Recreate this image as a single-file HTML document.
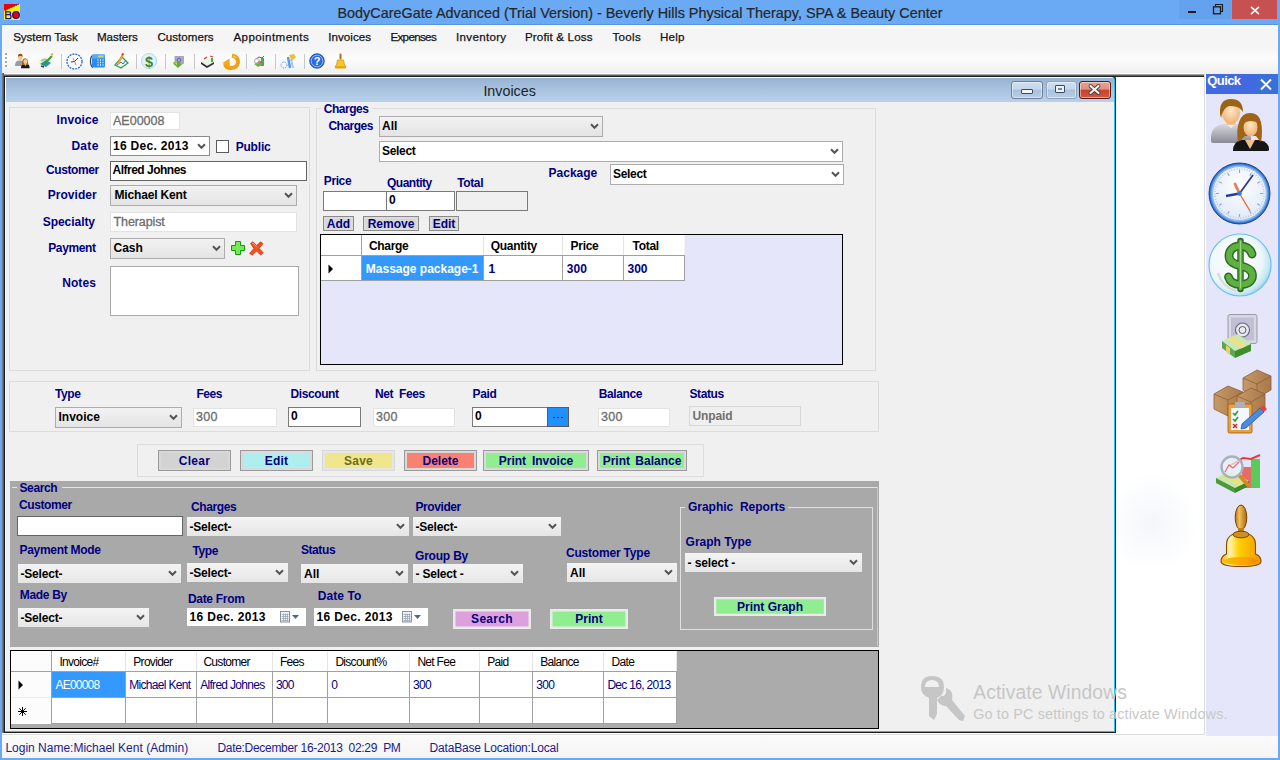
<!DOCTYPE html><html><head><meta charset="utf-8"><style>
html,body{margin:0;padding:0}
body{width:1280px;height:760px;overflow:hidden;position:relative;background:#6AAAF4;font-family:"Liberation Sans",sans-serif}
.r{position:absolute;box-sizing:content-box}
.t{position:absolute;white-space:nowrap}
svg.r{overflow:visible}
</style></head><body>
<svg class="r" style="left:4px;top:4px" width="16" height="16" viewBox="0 0 16 16"><rect x="0" y="0" width="16" height="16" fill="#FFF000"/><polygon points="0,0 15,0 0,6.8" fill="#F00000"/><line x1="1" y1="6.2" x2="15" y2="0" stroke="#1A10A0" stroke-width="1" stroke-dasharray="1.2 0.8"/><path d="M1.8,6.5 V14.6 H6.2 Q7,14.6 7,12.6 Q7,11 5.8,10.6 Q6.6,10 6.6,9 Q6.6,7.8 5.6,7.8 H1.8 M1.8,10.6 H5.8" fill="none" stroke="#1A10A0" stroke-width="1.3"/><circle cx="12" cy="11" r="3.3" fill="#F00000" stroke="#1A10A0" stroke-width="1.3"/></svg>
<div class="t" style="left:337.5px;top:5.81px;font-size:14.4px;line-height:14.4px;font-weight:normal;color:#262626;-webkit-text-stroke:0.2px #262626;">BodyCareGate Advanced (Trial Version) - Beverly Hills Physical Therapy, SPA &amp; Beauty Center</div>
<div class="r" style="left:1179px;top:0px;width:52px;height:19px;background:#64A2EE;"></div>
<div class="r" style="left:1188px;top:11px;width:8px;height:2px;background:#1A1A1A;"></div>
<svg class="r" style="left:1212px;top:3px" width="12" height="12" viewBox="0 0 12 12"><path d="M3.5,3 V1.5 H10.5 V8.5 H9" fill="none" stroke="#1A1A1A" stroke-width="1.1"/><rect x="1.5" y="3.8" width="7" height="7" fill="none" stroke="#1A1A1A" stroke-width="1.3"/></svg>
<div class="r" style="left:1232px;top:0px;width:45px;height:19px;background:#C75050;"></div>
<svg class="r" style="left:1250px;top:5.5px" width="10" height="9" viewBox="0 0 10 9"><path d="M1,0.8 L9,8.2 M9,0.8 L1,8.2" stroke="#fff" stroke-width="1.6"/></svg>
<div class="r" style="left:2px;top:24px;width:1276px;height:1px;background:#5A94DE;"></div>
<div class="r" style="left:2px;top:25px;width:1276px;height:733px;background:#F0F0F0;"></div>
<div class="r" style="left:2px;top:25px;width:1276px;height:24px;background:linear-gradient(#F8FAFA,#F5F5F5 20%,#F5F5F5);"></div>
<div class="t" style="left:13.2px;top:31.18px;font-size:11.6px;line-height:11.6px;font-weight:normal;color:#141414;letter-spacing:-0.09px;-webkit-text-stroke:0.25px #141414;">System Task</div>
<div class="t" style="left:97px;top:31.18px;font-size:11.6px;line-height:11.6px;font-weight:normal;color:#141414;letter-spacing:-0.08px;-webkit-text-stroke:0.25px #141414;">Masters</div>
<div class="t" style="left:157.5px;top:31.18px;font-size:11.6px;line-height:11.6px;font-weight:normal;color:#141414;-webkit-text-stroke:0.25px #141414;">Customers</div>
<div class="t" style="left:233.4px;top:31.18px;font-size:11.6px;line-height:11.6px;font-weight:normal;color:#141414;letter-spacing:0.41px;-webkit-text-stroke:0.25px #141414;">Appointments</div>
<div class="t" style="left:328.3px;top:31.18px;font-size:11.6px;line-height:11.6px;font-weight:normal;color:#141414;letter-spacing:0.03px;-webkit-text-stroke:0.25px #141414;">Invoices</div>
<div class="t" style="left:390.4px;top:31.18px;font-size:11.6px;line-height:11.6px;font-weight:normal;color:#141414;letter-spacing:-0.66px;-webkit-text-stroke:0.25px #141414;">Expenses</div>
<div class="t" style="left:456px;top:31.18px;font-size:11.6px;line-height:11.6px;font-weight:normal;color:#141414;letter-spacing:0.31px;-webkit-text-stroke:0.25px #141414;">Inventory</div>
<div class="t" style="left:524.9px;top:31.18px;font-size:11.6px;line-height:11.6px;font-weight:normal;color:#141414;letter-spacing:0.16px;-webkit-text-stroke:0.25px #141414;">Profit &amp; Loss</div>
<div class="t" style="left:612.5px;top:31.18px;font-size:11.6px;line-height:11.6px;font-weight:normal;color:#141414;letter-spacing:0.28px;-webkit-text-stroke:0.25px #141414;">Tools</div>
<div class="t" style="left:660px;top:31.18px;font-size:11.6px;line-height:11.6px;font-weight:normal;color:#141414;letter-spacing:0.23px;-webkit-text-stroke:0.25px #141414;">Help</div>
<div class="r" style="left:2px;top:49px;width:1276px;height:25px;background:linear-gradient(#F6F6F6,#FCFCFC 35%,#F6F6F6 70%,#EEEEEE);border-bottom-left-radius:3px;"></div>
<div class="r" style="left:2px;top:73px;width:1202px;height:663px;background:#FFFFFF;"></div>
<div class="r" style="left:1117px;top:465px;width:87px;height:120px;background:radial-gradient(ellipse 45px 50px at 35px 58px,rgba(232,238,246,0.5),rgba(255,255,255,0))"></div>
<div class="r" style="left:2px;top:74px;width:1202px;height:1px;background:#A4A4A4;"></div>
<div class="r" style="left:2px;top:75px;width:1202px;height:1px;background:#5E5E5E;"></div>
<div class="r" style="left:2px;top:76px;width:1202px;height:1px;background:#2A2A2E;"></div>
<div class="r" style="left:2px;top:73px;width:2px;height:663px;background:linear-gradient(90deg,#8A8A8A,#4A4A4A);"></div>
<div class="r" style="left:1204px;top:74px;width:1px;height:661px;background:#DCDCDC;"></div>
<div class="r" style="left:2px;top:734px;width:1203px;height:1px;background:#DCDCDC;"></div>
<div class="r" style="left:4px;top:76px;width:1112px;height:657px;background:#1A1A1E;border-top-right-radius:3px;"></div>
<div class="r" style="left:5px;top:77px;width:1110px;height:655px;background:#20C0F0;border-top-right-radius:3px;"></div>
<div class="r" style="left:5px;top:77px;width:1109px;height:654px;background:#FFFFFF;border-top-right-radius:3px;"></div>
<div class="r" style="left:6px;top:78px;width:1108px;height:24px;background:linear-gradient(#98B3D2,#A9C3E0 50%,#B9D1EA);"></div>
<div class="r" style="left:6px;top:102px;width:1108px;height:629px;background:#F0F0F0;"></div>
<div class="r" style="left:6px;top:102px;width:1px;height:629px;background:#DDEEF5;"></div>
<div class="t" style="left:483.4px;top:83.80px;font-size:14.3px;line-height:14.3px;font-weight:normal;color:#1E1E1E;">Invoices</div>
<div class="r" style="left:1011px;top:81px;width:30px;height:16px;border:1px solid #6F7F97;border-radius:3px;background:linear-gradient(#D0DFF0,#C3D6EC 45%,#A8C0DC 50%,#B8CEE8);box-shadow:inset 0 0 0 1px rgba(255,255,255,0.45)"></div>
<div class="r" style="left:1021px;top:89px;width:10px;height:3px;background:#F4F4F4;border:1px solid #3F4A5A;border-radius:1px"></div>
<div class="r" style="left:1046px;top:81px;width:29px;height:16px;border:1px solid #8FA3BD;border-radius:3px;background:linear-gradient(#D0DFF0,#C3D6EC 45%,#A8C0DC 50%,#B8CEE8);box-shadow:inset 0 0 0 1px rgba(255,255,255,0.45)"></div>
<div class="r" style="left:1055px;top:85px;width:8px;height:6px;background:#F0F0F0;border:1px solid #3F4A5A;border-radius:1px"></div>
<div class="r" style="left:1058px;top:88px;width:4px;height:2px;background:#6A8AB0"></div>
<div class="r" style="left:1079px;top:81px;width:30px;height:16px;border:1px solid #5A1A1A;border-radius:3px;background:linear-gradient(#E8A090,#E39080 45%,#C8402A 50%,#D05A40);box-shadow:inset 0 0 0 1px rgba(255,255,255,0.45)"></div>
<svg class="r" style="left:1088px;top:84px" width="13" height="11" viewBox="0 0 13 11"><path d="M2.5,2 L10.5,9 M10.5,2 L2.5,9" stroke="#3A3A4A" stroke-width="3.8" stroke-linecap="round"/><path d="M2.5,2 L10.5,9 M10.5,2 L2.5,9" stroke="#F4F4F4" stroke-width="2.2" stroke-linecap="round"/></svg>
<div class="r" style="left:9px;top:107px;width:299px;height:262px;background:transparent;border:1px solid #DCDCDC;"></div>
<div class="t" style="right:1181.4px;top:114.04px;font-size:12px;line-height:12px;font-weight:bold;color:#000080;letter-spacing:0.1px;">Invoice</div>
<div class="t" style="right:1181.4px;top:139.84px;font-size:12px;line-height:12px;font-weight:bold;color:#000080;letter-spacing:0.3px;">Date</div>
<div class="t" style="right:1181.2px;top:163.74px;font-size:12px;line-height:12px;font-weight:bold;color:#000080;letter-spacing:-0.4px;">Customer</div>
<div class="t" style="right:1183.2px;top:189.34px;font-size:12px;line-height:12px;font-weight:bold;color:#000080;letter-spacing:0.05px;">Provider</div>
<div class="t" style="right:1185px;top:215.84px;font-size:12px;line-height:12px;font-weight:bold;color:#000080;letter-spacing:-0.05px;">Specialty</div>
<div class="t" style="right:1184.5px;top:242.34px;font-size:12px;line-height:12px;font-weight:bold;color:#000080;letter-spacing:-0.4px;">Payment</div>
<div class="t" style="right:1184px;top:277.34px;font-size:12px;line-height:12px;font-weight:bold;color:#000080;letter-spacing:0.1px;">Notes</div>
<div class="r" style="left:110px;top:112px;width:68px;height:16px;background:#fff;border:1px solid #E3E3E3;"></div>
<div class="t" style="left:113px;top:114.72px;font-size:12.5px;line-height:12.5px;font-weight:normal;color:#6D6D6D;-webkit-text-stroke:0.3px #6D6D6D;">AE00008</div>
<div class="r" style="left:110px;top:136px;width:98px;height:18px;background:#fff;border:1px solid #8C8C8C;"></div>
<div class="t" style="left:113px;top:139.84px;font-size:12px;line-height:12px;font-weight:bold;color:#000;letter-spacing:0.3px;">16 Dec. 2013</div>
<svg class="r" style="left:197.0px;top:142.5px" width="9" height="7" viewBox="0 0 9 7"><polyline points="1,1.2 4.5,4.8 8,1.2" fill="none" stroke="#555" stroke-width="2"/></svg>
<div class="r" style="left:216px;top:140px;width:11px;height:11px;background:#fff;border:1px solid #5A5A5A;"></div>
<div class="t" style="left:235.7px;top:140.84px;font-size:12px;line-height:12px;font-weight:bold;color:#000080;letter-spacing:-0.2px;">Public</div>
<div class="r" style="left:110px;top:161px;width:195px;height:18px;background:#fff;border:1px solid #646464;"></div>
<div class="t" style="left:112.5px;top:163.84px;font-size:12px;line-height:12px;font-weight:bold;color:#000;letter-spacing:-0.5px;">Alfred Johnes</div>
<div class="r" style="left:110px;top:185px;width:185px;height:19px;background:linear-gradient(#F2F2F2,#E4E4E4);border:1px solid #ACACAC;"></div>
<div class="t" style="left:114.5px;top:189.44px;font-size:12px;line-height:12px;font-weight:bold;color:#000;letter-spacing:-0.17px;">Michael Kent</div>
<svg class="r" style="left:284.0px;top:192.0px" width="9" height="7" viewBox="0 0 9 7"><polyline points="1,1.2 4.5,4.8 8,1.2" fill="none" stroke="#555" stroke-width="2"/></svg>
<div class="r" style="left:110px;top:212px;width:185px;height:18px;background:#fff;border:1px solid #E3E3E3;"></div>
<div class="t" style="left:113.5px;top:215.62px;font-size:12.5px;line-height:12.5px;font-weight:normal;color:#6D6D6D;letter-spacing:-0.1px;-webkit-text-stroke:0.3px #6D6D6D;">Therapist</div>
<div class="r" style="left:110px;top:238px;width:113px;height:18.5px;background:linear-gradient(#F2F2F2,#E4E4E4);border:1px solid #ACACAC;"></div>
<div class="t" style="left:113.5px;top:242.44px;font-size:12px;line-height:12px;font-weight:bold;color:#000;">Cash</div>
<svg class="r" style="left:212.0px;top:244.8px" width="9" height="7" viewBox="0 0 9 7"><polyline points="1,1.2 4.5,4.8 8,1.2" fill="none" stroke="#555" stroke-width="2"/></svg>
<svg class="r" style="left:231px;top:241px" width="14" height="14" viewBox="0 0 14 14"><path d="M4.5,0.5 H9.5 V4.5 H13.5 V9.5 H9.5 V13.5 H4.5 V9.5 H0.5 V4.5 H4.5 Z" fill="#78E858" stroke="#109A10" stroke-width="1"/></svg>
<svg class="r" style="left:249px;top:241px" width="15" height="15" viewBox="0 0 15 15"><path d="M1.5,2.5 L4,0.8 L7.8,4.6 L11.5,0.8 L14,2.8 L10,7.2 L14.2,11.8 L11.6,14 L7.6,10 L3.4,14 L0.6,12.4 L5,7.4 Z" fill="#F4501E" stroke="#D02000" stroke-width="0.7"/><path d="M3,3 L4,2 L7.8,6" stroke="#FF9A70" stroke-width="1" fill="none"/></svg>
<div class="r" style="left:110px;top:266px;width:187px;height:48px;background:#fff;border:1px solid #ABABAB;"></div>
<div class="r" style="left:315.5px;top:108px;width:558.5px;height:261px;background:transparent;border:1px solid #DCDCDC;"></div>
<div class="r" style="left:322px;top:103px;width:50px;height:9px;background:#F0F0F0;"></div>
<div class="t" style="left:323.8px;top:102.84px;font-size:12px;line-height:12px;font-weight:bold;color:#000080;letter-spacing:-0.5px;">Charges</div>
<div class="t" style="left:328.4px;top:120.24px;font-size:12px;line-height:12px;font-weight:bold;color:#000080;letter-spacing:-0.5px;">Charges</div>
<div class="r" style="left:379px;top:116px;width:222px;height:19px;background:linear-gradient(#F2F2F2,#E4E4E4);border:1px solid #ACACAC;"></div>
<div class="t" style="left:382px;top:120.44px;font-size:12px;line-height:12px;font-weight:bold;color:#000;">All</div>
<svg class="r" style="left:590.0px;top:123.0px" width="9" height="7" viewBox="0 0 9 7"><polyline points="1,1.2 4.5,4.8 8,1.2" fill="none" stroke="#555" stroke-width="2"/></svg>
<div class="r" style="left:379px;top:141px;width:462px;height:18.5px;background:#fff;border:1px solid #ACACAC;"></div>
<div class="t" style="left:382px;top:144.84px;font-size:12px;line-height:12px;font-weight:bold;color:#000;letter-spacing:-0.3px;">Select</div>
<svg class="r" style="left:830.0px;top:147.8px" width="9" height="7" viewBox="0 0 9 7"><polyline points="1,1.2 4.5,4.8 8,1.2" fill="none" stroke="#555" stroke-width="2"/></svg>
<div class="t" style="left:548.6px;top:167.24px;font-size:12px;line-height:12px;font-weight:bold;color:#000080;">Package</div>
<div class="r" style="left:610px;top:164.3px;width:232px;height:18.69999999999999px;background:#fff;border:1px solid #ACACAC;"></div>
<div class="t" style="left:613px;top:168.14px;font-size:12px;line-height:12px;font-weight:bold;color:#000;letter-spacing:-0.3px;">Select</div>
<svg class="r" style="left:831.0px;top:171.2px" width="9" height="7" viewBox="0 0 9 7"><polyline points="1,1.2 4.5,4.8 8,1.2" fill="none" stroke="#555" stroke-width="2"/></svg>
<div class="t" style="left:323.8px;top:175.44px;font-size:12px;line-height:12px;font-weight:bold;color:#000080;letter-spacing:-0.4px;">Price</div>
<div class="t" style="left:387px;top:176.84px;font-size:12px;line-height:12px;font-weight:bold;color:#000080;letter-spacing:-0.5px;">Quantity</div>
<div class="t" style="left:457.3px;top:176.84px;font-size:12px;line-height:12px;font-weight:bold;color:#000080;letter-spacing:-0.4px;">Total</div>
<div class="r" style="left:323px;top:191px;width:62px;height:18px;background:#fff;border:1px solid #7A7A7A;"></div>
<div class="r" style="left:386px;top:191px;width:67px;height:18px;background:#fff;border:1px solid #7A7A7A;"></div>
<div class="t" style="left:389px;top:193.84px;font-size:12px;line-height:12px;font-weight:bold;color:#000;">0</div>
<div class="r" style="left:456px;top:191px;width:70px;height:18px;background:#F0F0F0;border:1px solid #7A7A7A;"></div>
<div class="r" style="left:323px;top:216px;width:29px;height:13px;border:1px solid #8A8A8A;background:#D6D6D6;box-shadow:inset 0 0 0 2px #DCDCDC;"></div>
<div class="t" style="left:323px;width:31px;text-align:center;top:217.84px;font-size:12px;line-height:12px;font-weight:bold;color:#000080;letter-spacing:0px;word-spacing:0px;">Add</div>
<div class="r" style="left:363px;top:216px;width:54px;height:13px;border:1px solid #8A8A8A;background:#D6D6D6;box-shadow:inset 0 0 0 2px #DCDCDC;"></div>
<div class="t" style="left:363px;width:56px;text-align:center;top:217.84px;font-size:12px;line-height:12px;font-weight:bold;color:#000080;letter-spacing:0px;word-spacing:0px;">Remove</div>
<div class="r" style="left:429px;top:216px;width:28px;height:13px;border:1px solid #8A8A8A;background:#D6D6D6;box-shadow:inset 0 0 0 2px #DCDCDC;"></div>
<div class="t" style="left:429px;width:30px;text-align:center;top:217.84px;font-size:12px;line-height:12px;font-weight:bold;color:#000080;letter-spacing:0px;word-spacing:0px;">Edit</div>
<div class="r" style="left:320px;top:234px;width:521px;height:129px;background:#E6E6FA;border:1px solid #000000;"></div>
<div class="r" style="left:321px;top:235px;width:364px;height:20px;background:#FFFFFF;"></div>
<div class="r" style="left:321px;top:255px;width:41px;height:26px;background:#FFFFFF;"></div>
<div class="r" style="left:362px;top:255px;width:121.5px;height:26px;background:#3399FF;"></div>
<div class="r" style="left:483.5px;top:255px;width:201.5px;height:26px;background:#FFFFFF;"></div>
<div class="r" style="left:321px;top:255px;width:364px;height:1px;background:#A0A0A0;"></div>
<div class="r" style="left:321px;top:280px;width:364px;height:1px;background:#A0A0A0;"></div>
<div class="r" style="left:483px;top:256px;width:1px;height:25px;background:#A0A0A0;"></div>
<div class="r" style="left:562px;top:256px;width:1px;height:25px;background:#A0A0A0;"></div>
<div class="r" style="left:623px;top:256px;width:1px;height:25px;background:#A0A0A0;"></div>
<div class="r" style="left:684px;top:256px;width:1px;height:25px;background:#A0A0A0;"></div>
<div class="r" style="left:361px;top:235px;width:1px;height:46px;background:#A0A0A0;"></div>
<div class="r" style="left:483px;top:236px;width:1px;height:19px;background:#E4E4E4;"></div>
<div class="r" style="left:562px;top:236px;width:1px;height:19px;background:#E4E4E4;"></div>
<div class="r" style="left:623px;top:236px;width:1px;height:19px;background:#E4E4E4;"></div>
<div class="r" style="left:684px;top:235px;width:1px;height:20px;background:#F4F4F4;"></div>
<svg class="r" style="left:328px;top:264px" width="6" height="10" viewBox="0 0 6 10"><polygon points="0.5,0.5 5,5 0.5,9.5" fill="#000"/></svg>
<div class="t" style="left:368.9px;top:239.84px;font-size:12px;line-height:12px;font-weight:bold;color:#000;letter-spacing:-0.3px;">Charge</div>
<div class="t" style="left:490.7px;top:239.84px;font-size:12px;line-height:12px;font-weight:bold;color:#000;letter-spacing:-0.3px;">Quantity</div>
<div class="t" style="left:570.6px;top:239.84px;font-size:12px;line-height:12px;font-weight:bold;color:#000;letter-spacing:-0.3px;">Price</div>
<div class="t" style="left:632.6px;top:239.84px;font-size:12px;line-height:12px;font-weight:bold;color:#000;letter-spacing:-0.3px;">Total</div>
<div class="t" style="left:365.8px;top:262.84px;font-size:12px;line-height:12px;font-weight:bold;color:#FFFFFF;">Massage package-1</div>
<div class="t" style="left:488.6px;top:262.84px;font-size:12px;line-height:12px;font-weight:bold;color:#000080;">1</div>
<div class="t" style="left:566.8px;top:262.84px;font-size:12px;line-height:12px;font-weight:bold;color:#000080;">300</div>
<div class="t" style="left:627.5px;top:262.84px;font-size:12px;line-height:12px;font-weight:bold;color:#000080;">300</div>
<div class="r" style="left:9px;top:381px;width:868px;height:49px;background:transparent;border:1px solid #DCDCDC;"></div>
<div class="t" style="left:55px;top:387.84px;font-size:12px;line-height:12px;font-weight:bold;color:#000080;letter-spacing:-0.4px;">Type</div>
<div class="t" style="left:196.4px;top:387.84px;font-size:12px;line-height:12px;font-weight:bold;color:#000080;letter-spacing:-0.4px;">Fees</div>
<div class="t" style="left:290.5px;top:387.84px;font-size:12px;line-height:12px;font-weight:bold;color:#000080;letter-spacing:-0.4px;">Discount</div>
<div class="t" style="left:375px;top:387.84px;font-size:12px;line-height:12px;font-weight:bold;color:#000080;letter-spacing:-0.4px;">Net&nbsp; Fees</div>
<div class="t" style="left:472.6px;top:387.84px;font-size:12px;line-height:12px;font-weight:bold;color:#000080;letter-spacing:-0.4px;">Paid</div>
<div class="t" style="left:598.75px;top:387.84px;font-size:12px;line-height:12px;font-weight:bold;color:#000080;letter-spacing:-0.4px;">Balance</div>
<div class="t" style="left:689.5px;top:387.84px;font-size:12px;line-height:12px;font-weight:bold;color:#000080;letter-spacing:-0.4px;">Status</div>
<div class="r" style="left:54.5px;top:407px;width:125.5px;height:18.5px;background:linear-gradient(#F2F2F2,#E4E4E4);border:1px solid #ACACAC;"></div>
<div class="t" style="left:58.5px;top:411.44px;font-size:12px;line-height:12px;font-weight:bold;color:#000;">Invoice</div>
<svg class="r" style="left:169.0px;top:413.8px" width="9" height="7" viewBox="0 0 9 7"><polyline points="1,1.2 4.5,4.8 8,1.2" fill="none" stroke="#555" stroke-width="2"/></svg>
<div class="r" style="left:193px;top:408px;width:82px;height:17px;background:#fff;border:1px solid #E3E3E3;"></div>
<div class="t" style="left:196px;top:410.62px;font-size:12.5px;line-height:12.5px;font-weight:normal;color:#6D6D6D;letter-spacing:0.3px;-webkit-text-stroke:0.3px #6D6D6D;">300</div>
<div class="r" style="left:288px;top:407px;width:71px;height:18px;background:#fff;border:1px solid #7A7A7A;"></div>
<div class="t" style="left:291px;top:409.84px;font-size:12px;line-height:12px;font-weight:bold;color:#000;">0</div>
<div class="r" style="left:373px;top:408px;width:80px;height:17px;background:#fff;border:1px solid #E3E3E3;"></div>
<div class="t" style="left:376px;top:410.62px;font-size:12.5px;line-height:12.5px;font-weight:normal;color:#6D6D6D;letter-spacing:0.3px;-webkit-text-stroke:0.3px #6D6D6D;">300</div>
<div class="r" style="left:472px;top:407px;width:74px;height:18px;background:#fff;border:1px solid #7A7A7A;"></div>
<div class="t" style="left:475px;top:409.84px;font-size:12px;line-height:12px;font-weight:bold;color:#000;">0</div>
<div class="r" style="left:547px;top:407px;width:20px;height:18px;background:#1E90FF;border:1px solid #5A5A5A;"></div>
<div class="r" style="left:553px;top:417px;width:2px;height:1px;background:#1A1A60;"></div>
<div class="r" style="left:557px;top:417px;width:2px;height:1px;background:#1A1A60;"></div>
<div class="r" style="left:561px;top:417px;width:2px;height:1px;background:#1A1A60;"></div>
<div class="r" style="left:598px;top:408px;width:70px;height:17px;background:#fff;border:1px solid #E3E3E3;"></div>
<div class="t" style="left:601px;top:410.62px;font-size:12.5px;line-height:12.5px;font-weight:normal;color:#6D6D6D;letter-spacing:0.3px;-webkit-text-stroke:0.3px #6D6D6D;">300</div>
<div class="r" style="left:689px;top:406px;width:110px;height:18px;background:#EFEFEF;border:1px solid #D8D8D8;"></div>
<div class="t" style="left:692.5px;top:409.64px;font-size:12px;line-height:12px;font-weight:bold;color:#707070;letter-spacing:-0.1px;">Unpaid</div>
<div class="r" style="left:137px;top:444px;width:565px;height:31px;background:transparent;border:1px solid #DCDCDC;"></div>
<div class="r" style="left:158px;top:450px;width:71px;height:19px;border:1px solid #9A9A9A;background:#D3D3D3;box-shadow:inset 0 0 0 2px #D8D8D8;"></div>
<div class="t" style="left:158px;width:73px;text-align:center;top:454.84px;font-size:12px;line-height:12px;font-weight:bold;color:#000080;letter-spacing:0.3px;word-spacing:0px;">Clear</div>
<div class="r" style="left:240px;top:450px;width:71px;height:19px;border:1px solid #9A9A9A;background:#AFEEEE;box-shadow:inset 0 0 0 2px #DADADA;"></div>
<div class="t" style="left:240px;width:73px;text-align:center;top:454.84px;font-size:12px;line-height:12px;font-weight:bold;color:#000080;letter-spacing:0.2px;word-spacing:0px;">Edit</div>
<div class="r" style="left:322px;top:450px;width:71px;height:19px;border:1px solid #D8D8D8;background:#F0E68C;box-shadow:inset 0 0 0 2px #E6E6E6;"></div>
<div class="t" style="left:322px;width:73px;text-align:center;top:454.84px;font-size:12px;line-height:12px;font-weight:bold;color:#6B6B1A;letter-spacing:0.2px;word-spacing:0px;">Save</div>
<div class="r" style="left:404px;top:450px;width:71px;height:19px;border:1px solid #9A9A9A;background:#FA8072;box-shadow:inset 0 0 0 2px #DADADA;"></div>
<div class="t" style="left:404px;width:73px;text-align:center;top:454.84px;font-size:12px;line-height:12px;font-weight:bold;color:#000080;letter-spacing:0px;word-spacing:0px;">Delete</div>
<div class="r" style="left:483px;top:450px;width:104px;height:19px;border:1px solid #9A9A9A;background:#90EE90;box-shadow:inset 0 0 0 2px #DADADA;"></div>
<div class="t" style="left:483px;width:106px;text-align:center;top:454.84px;font-size:12px;line-height:12px;font-weight:bold;color:#000080;letter-spacing:0px;word-spacing:2.5px;">Print Invoice</div>
<div class="r" style="left:597px;top:450px;width:88px;height:19px;border:1px solid #9A9A9A;background:#90EE90;box-shadow:inset 0 0 0 2px #DADADA;"></div>
<div class="t" style="left:597px;width:90px;text-align:center;top:454.84px;font-size:12px;line-height:12px;font-weight:bold;color:#000080;letter-spacing:0px;word-spacing:2px;">Print Balance</div>
<div class="r" style="left:10px;top:481px;width:869px;height:166px;background:#A9A9A9;"></div>
<div class="r" style="left:12px;top:487px;width:866px;height:1px;background:#E4E4E4;"></div>
<div class="r" style="left:877px;top:487px;width:1px;height:159px;background:#C8C8C8;"></div>
<div class="r" style="left:17px;top:482px;width:45px;height:12px;background:#A9A9A9;"></div>
<div class="t" style="left:19.5px;top:482.04px;font-size:12px;line-height:12px;font-weight:bold;color:#000080;letter-spacing:-0.4px;">Search</div>
<div class="t" style="left:19px;top:499.04px;font-size:12px;line-height:12px;font-weight:bold;color:#000080;letter-spacing:-0.4px;">Customer</div>
<div class="t" style="left:191px;top:500.94px;font-size:12px;line-height:12px;font-weight:bold;color:#000080;letter-spacing:-0.4px;">Charges</div>
<div class="t" style="left:415.4px;top:500.64px;font-size:12px;line-height:12px;font-weight:bold;color:#000080;letter-spacing:-0.4px;">Provider</div>
<div class="r" style="left:17px;top:516px;width:164px;height:18px;background:#fff;border:1px solid #646464;"></div>
<div class="r" style="left:187px;top:517px;width:222px;height:19px;background:linear-gradient(#F4F4F4,#E6E6E6);"></div>
<div class="t" style="left:189.5px;top:520.64px;font-size:12px;line-height:12px;font-weight:bold;color:#000;letter-spacing:-0.2px;">-Select-</div>
<svg class="r" style="left:396.0px;top:523.0px" width="9" height="7" viewBox="0 0 9 7"><polyline points="1,1.2 4.5,4.8 8,1.2" fill="none" stroke="#555" stroke-width="2"/></svg>
<div class="r" style="left:413px;top:517px;width:148px;height:19px;background:linear-gradient(#F4F4F4,#E6E6E6);"></div>
<div class="t" style="left:415.5px;top:520.64px;font-size:12px;line-height:12px;font-weight:bold;color:#000;letter-spacing:-0.2px;">-Select-</div>
<svg class="r" style="left:548.0px;top:523.0px" width="9" height="7" viewBox="0 0 9 7"><polyline points="1,1.2 4.5,4.8 8,1.2" fill="none" stroke="#555" stroke-width="2"/></svg>
<div class="t" style="left:19.5px;top:543.84px;font-size:12px;line-height:12px;font-weight:bold;color:#000080;letter-spacing:-0.3px;">Payment Mode</div>
<div class="t" style="left:192.4px;top:544.84px;font-size:12px;line-height:12px;font-weight:bold;color:#000080;letter-spacing:-0.4px;">Type</div>
<div class="t" style="left:300.9px;top:543.84px;font-size:12px;line-height:12px;font-weight:bold;color:#000080;letter-spacing:-0.4px;">Status</div>
<div class="t" style="left:415px;top:549.64px;font-size:12px;line-height:12px;font-weight:bold;color:#000080;letter-spacing:-0.2px;">Group By</div>
<div class="t" style="left:566px;top:546.64px;font-size:12px;line-height:12px;font-weight:bold;color:#000080;letter-spacing:-0.2px;">Customer Type</div>
<div class="r" style="left:18px;top:564px;width:163px;height:19px;background:linear-gradient(#F4F4F4,#E6E6E6);"></div>
<div class="t" style="left:20.5px;top:567.64px;font-size:12px;line-height:12px;font-weight:bold;color:#000;letter-spacing:-0.2px;">-Select-</div>
<svg class="r" style="left:168.0px;top:570.0px" width="9" height="7" viewBox="0 0 9 7"><polyline points="1,1.2 4.5,4.8 8,1.2" fill="none" stroke="#555" stroke-width="2"/></svg>
<div class="r" style="left:187px;top:563px;width:101px;height:19px;background:linear-gradient(#F4F4F4,#E6E6E6);"></div>
<div class="t" style="left:189.5px;top:566.64px;font-size:12px;line-height:12px;font-weight:bold;color:#000;letter-spacing:-0.2px;">-Select-</div>
<svg class="r" style="left:275.0px;top:569.0px" width="9" height="7" viewBox="0 0 9 7"><polyline points="1,1.2 4.5,4.8 8,1.2" fill="none" stroke="#555" stroke-width="2"/></svg>
<div class="r" style="left:301px;top:564px;width:107px;height:19px;background:linear-gradient(#F4F4F4,#E6E6E6);"></div>
<div class="t" style="left:304px;top:567.64px;font-size:12px;line-height:12px;font-weight:bold;color:#000;">All</div>
<svg class="r" style="left:395.0px;top:570.0px" width="9" height="7" viewBox="0 0 9 7"><polyline points="1,1.2 4.5,4.8 8,1.2" fill="none" stroke="#555" stroke-width="2"/></svg>
<div class="r" style="left:413px;top:564px;width:110px;height:18.5px;background:linear-gradient(#F4F4F4,#E6E6E6);"></div>
<div class="t" style="left:415.5px;top:567.64px;font-size:12px;line-height:12px;font-weight:bold;color:#000;letter-spacing:-0.2px;">- Select -</div>
<svg class="r" style="left:510.0px;top:569.8px" width="9" height="7" viewBox="0 0 9 7"><polyline points="1,1.2 4.5,4.8 8,1.2" fill="none" stroke="#555" stroke-width="2"/></svg>
<div class="r" style="left:567px;top:563px;width:110px;height:19px;background:linear-gradient(#F4F4F4,#E6E6E6);"></div>
<div class="t" style="left:570px;top:566.64px;font-size:12px;line-height:12px;font-weight:bold;color:#000;">All</div>
<svg class="r" style="left:664.0px;top:569.0px" width="9" height="7" viewBox="0 0 9 7"><polyline points="1,1.2 4.5,4.8 8,1.2" fill="none" stroke="#555" stroke-width="2"/></svg>
<div class="t" style="left:19.7px;top:589.14px;font-size:12px;line-height:12px;font-weight:bold;color:#000080;letter-spacing:-0.3px;">Made By</div>
<div class="t" style="left:187.9px;top:592.84px;font-size:12px;line-height:12px;font-weight:bold;color:#000080;letter-spacing:-0.3px;">Date From</div>
<div class="t" style="left:317.7px;top:590.14px;font-size:12px;line-height:12px;font-weight:bold;color:#000080;letter-spacing:0.1px;">Date To</div>
<div class="r" style="left:18px;top:608px;width:131px;height:19px;background:linear-gradient(#F4F4F4,#E6E6E6);"></div>
<div class="t" style="left:20.5px;top:611.64px;font-size:12px;line-height:12px;font-weight:bold;color:#000;letter-spacing:-0.2px;">-Select-</div>
<svg class="r" style="left:136.0px;top:614.0px" width="9" height="7" viewBox="0 0 9 7"><polyline points="1,1.2 4.5,4.8 8,1.2" fill="none" stroke="#555" stroke-width="2"/></svg>
<div class="r" style="left:187px;top:608px;width:119px;height:18px;background:#FFFFFF;"></div>
<div class="t" style="left:189.5px;top:611.34px;font-size:12px;line-height:12px;font-weight:bold;color:#000;letter-spacing:0.35px;">16 Dec. 2013</div>
<svg class="r" style="left:280px;top:611px" width="20" height="12" viewBox="0 0 20 12"><rect x="0.5" y="0.5" width="9" height="10.5" fill="#F4F6FA" stroke="#8A8F9A" stroke-width="1"/><path d="M1.5,3.5 H8.5 M1.5,5.5 H8.5 M1.5,7.5 H8.5 M1.5,9.5 H8.5 M3.5,2.5 V10.5 M5.5,2.5 V10.5 M7.5,2.5 V10.5" stroke="#9AA4B4" stroke-width="0.8"/><polygon points="12,4 19,4 15.5,8" fill="#4A6A9A"/></svg>
<div class="r" style="left:314px;top:608px;width:114px;height:18px;background:#FFFFFF;"></div>
<div class="t" style="left:316.5px;top:611.34px;font-size:12px;line-height:12px;font-weight:bold;color:#000;letter-spacing:0.35px;">16 Dec. 2013</div>
<svg class="r" style="left:402px;top:611px" width="20" height="12" viewBox="0 0 20 12"><rect x="0.5" y="0.5" width="9" height="10.5" fill="#F4F6FA" stroke="#8A8F9A" stroke-width="1"/><path d="M1.5,3.5 H8.5 M1.5,5.5 H8.5 M1.5,7.5 H8.5 M1.5,9.5 H8.5 M3.5,2.5 V10.5 M5.5,2.5 V10.5 M7.5,2.5 V10.5" stroke="#9AA4B4" stroke-width="0.8"/><polygon points="12,4 19,4 15.5,8" fill="#4A6A9A"/></svg>
<div class="r" style="left:453px;top:609px;width:76px;height:18px;border:1px solid #EAEAEA;background:#DDA0DD;box-shadow:inset 0 0 0 1.5px #EAEAEA;"></div>
<div class="t" style="left:453px;width:78px;text-align:center;top:612.84px;font-size:12px;line-height:12px;font-weight:bold;color:#000080;letter-spacing:0.3px;word-spacing:0px;">Search</div>
<div class="r" style="left:550px;top:609px;width:76px;height:18px;border:1px solid #EAEAEA;background:#90EE90;box-shadow:inset 0 0 0 1.5px #EAEAEA;"></div>
<div class="t" style="left:550px;width:78px;text-align:center;top:612.84px;font-size:12px;line-height:12px;font-weight:bold;color:#000080;letter-spacing:0px;word-spacing:0px;">Print</div>
<div class="r" style="left:679.5px;top:506.5px;width:191.5px;height:121.5px;background:transparent;border:1px solid #E0E0E0;"></div>
<div class="r" style="left:685px;top:500px;width:103px;height:13px;background:#A9A9A9;"></div>
<div class="t" style="left:687.9px;top:500.74px;font-size:12px;line-height:12px;font-weight:bold;color:#000080;">Graphic&nbsp; Reports</div>
<div class="t" style="left:685.6px;top:536.44px;font-size:12px;line-height:12px;font-weight:bold;color:#000080;">Graph Type</div>
<div class="r" style="left:685px;top:553px;width:177px;height:19px;background:linear-gradient(#F4F4F4,#E6E6E6);"></div>
<div class="t" style="left:687.5px;top:556.64px;font-size:12px;line-height:12px;font-weight:bold;color:#000;letter-spacing:-0.1px;">- select -</div>
<svg class="r" style="left:849.0px;top:559.0px" width="9" height="7" viewBox="0 0 9 7"><polyline points="1,1.2 4.5,4.8 8,1.2" fill="none" stroke="#555" stroke-width="2"/></svg>
<div class="r" style="left:714px;top:597px;width:110px;height:17px;border:1px solid #EAEAEA;background:#90EE90;box-shadow:inset 0 0 0 1.2px #EAEAEA;"></div>
<div class="t" style="left:714px;width:112px;text-align:center;top:601.14px;font-size:12px;line-height:12px;font-weight:bold;color:#000080;letter-spacing:0px;word-spacing:0px;">Print Graph</div>
<div class="r" style="left:10px;top:650px;width:867px;height:77px;background:#ABABAB;border:1px solid #000000;"></div>
<div class="r" style="left:11px;top:651px;width:666px;height:73px;background:#FFFFFF;"></div>
<div class="r" style="left:11px;top:651px;width:40.5px;height:73px;background:#FCFCFC;"></div>
<div class="r" style="left:51px;top:671px;width:626px;height:1px;background:#A0A0A0;"></div>
<div class="r" style="left:51px;top:697px;width:626px;height:1px;background:#A0A0A0;"></div>
<div class="r" style="left:51px;top:723px;width:626px;height:1px;background:#A0A0A0;"></div>
<div class="r" style="left:51px;top:672px;width:1px;height:52px;background:#A0A0A0;"></div>
<div class="r" style="left:125px;top:672px;width:1px;height:52px;background:#A0A0A0;"></div>
<div class="r" style="left:196px;top:672px;width:1px;height:52px;background:#A0A0A0;"></div>
<div class="r" style="left:272px;top:672px;width:1px;height:52px;background:#A0A0A0;"></div>
<div class="r" style="left:327px;top:672px;width:1px;height:52px;background:#A0A0A0;"></div>
<div class="r" style="left:409px;top:672px;width:1px;height:52px;background:#A0A0A0;"></div>
<div class="r" style="left:479px;top:672px;width:1px;height:52px;background:#A0A0A0;"></div>
<div class="r" style="left:532px;top:672px;width:1px;height:52px;background:#A0A0A0;"></div>
<div class="r" style="left:603px;top:672px;width:1px;height:52px;background:#A0A0A0;"></div>
<div class="r" style="left:676px;top:672px;width:1px;height:52px;background:#A0A0A0;"></div>
<div class="r" style="left:51px;top:652px;width:1px;height:19px;background:#E4E4E4;"></div>
<div class="r" style="left:125px;top:652px;width:1px;height:19px;background:#E4E4E4;"></div>
<div class="r" style="left:196px;top:652px;width:1px;height:19px;background:#E4E4E4;"></div>
<div class="r" style="left:272px;top:652px;width:1px;height:19px;background:#E4E4E4;"></div>
<div class="r" style="left:327px;top:652px;width:1px;height:19px;background:#E4E4E4;"></div>
<div class="r" style="left:409px;top:652px;width:1px;height:19px;background:#E4E4E4;"></div>
<div class="r" style="left:479px;top:652px;width:1px;height:19px;background:#E4E4E4;"></div>
<div class="r" style="left:532px;top:652px;width:1px;height:19px;background:#E4E4E4;"></div>
<div class="r" style="left:603px;top:652px;width:1px;height:19px;background:#E4E4E4;"></div>
<div class="r" style="left:676px;top:652px;width:1px;height:19px;background:#E4E4E4;"></div>
<div class="r" style="left:11px;top:671px;width:40px;height:1px;background:#A0A0A0;"></div>
<div class="r" style="left:11px;top:697px;width:40px;height:1px;background:#E4ECF4;"></div>
<div class="r" style="left:51px;top:651px;width:1px;height:73px;background:#A0A0A0;"></div>
<div class="r" style="left:52px;top:672px;width:73px;height:25px;background:#3399FF;"></div>
<div class="t" style="left:59.4px;top:655.84px;font-size:12px;line-height:12px;font-weight:normal;color:#000;letter-spacing:-0.7px;">Invoice#</div>
<div class="t" style="left:133.3px;top:655.84px;font-size:12px;line-height:12px;font-weight:normal;color:#000;letter-spacing:-0.7px;">Provider</div>
<div class="t" style="left:203.4px;top:655.84px;font-size:12px;line-height:12px;font-weight:normal;color:#000;letter-spacing:-0.7px;">Customer</div>
<div class="t" style="left:279.9px;top:655.84px;font-size:12px;line-height:12px;font-weight:normal;color:#000;letter-spacing:-0.7px;">Fees</div>
<div class="t" style="left:335.4px;top:655.84px;font-size:12px;line-height:12px;font-weight:normal;color:#000;letter-spacing:-0.7px;">Discount%</div>
<div class="t" style="left:417.4px;top:655.84px;font-size:12px;line-height:12px;font-weight:normal;color:#000;letter-spacing:-0.7px;">Net Fee</div>
<div class="t" style="left:487.2px;top:655.84px;font-size:12px;line-height:12px;font-weight:normal;color:#000;letter-spacing:-0.7px;">Paid</div>
<div class="t" style="left:540.3px;top:655.84px;font-size:12px;line-height:12px;font-weight:normal;color:#000;letter-spacing:-0.7px;">Balance</div>
<div class="t" style="left:611.6px;top:655.84px;font-size:12px;line-height:12px;font-weight:normal;color:#000;letter-spacing:-0.7px;">Date</div>
<div class="t" style="left:55.5px;top:679.34px;font-size:12px;line-height:12px;font-weight:normal;color:#FFFFFF;letter-spacing:-0.8px;">AE00008</div>
<div class="t" style="left:129.3px;top:679.34px;font-size:12px;line-height:12px;font-weight:normal;color:#000080;letter-spacing:-0.7px;">Michael Kent</div>
<div class="t" style="left:200.2px;top:679.34px;font-size:12px;line-height:12px;font-weight:normal;color:#000080;letter-spacing:-0.7px;">Alfred Johnes</div>
<div class="t" style="left:275.9px;top:679.34px;font-size:12px;line-height:12px;font-weight:normal;color:#000080;letter-spacing:-0.7px;">300</div>
<div class="t" style="left:331.3px;top:679.34px;font-size:12px;line-height:12px;font-weight:normal;color:#000080;letter-spacing:-0.7px;">0</div>
<div class="t" style="left:413px;top:679.34px;font-size:12px;line-height:12px;font-weight:normal;color:#000080;letter-spacing:-0.7px;">300</div>
<div class="t" style="left:536.2px;top:679.34px;font-size:12px;line-height:12px;font-weight:normal;color:#000080;letter-spacing:-0.7px;">300</div>
<div class="t" style="left:607.4px;top:679.34px;font-size:12px;line-height:12px;font-weight:normal;color:#000080;letter-spacing:-0.7px;">Dec 16, 2013</div>
<svg class="r" style="left:18px;top:680px" width="6" height="10" viewBox="0 0 6 10"><polygon points="0.5,0.5 5,5 0.5,9.5" fill="#000"/></svg>
<svg class="r" style="left:17px;top:706px" width="11" height="11" viewBox="0 0 11 11"><path d="M5.5,1 V10 M1,5.5 H10 M2.3,2.3 L8.7,8.7 M8.7,2.3 L2.3,8.7" stroke="#000" stroke-width="1"/><circle cx="5.5" cy="5.5" r="1.5" fill="#000"/></svg>
<div class="r" style="left:1205px;top:74px;width:1px;height:662px;background:#FFFFFF;"></div>
<div class="r" style="left:1206px;top:74px;width:72px;height:662px;background:#E6E6FA;"></div>
<div class="r" style="left:1206px;top:74px;width:72px;height:20px;background:#4169E1;"></div>
<div class="r" style="left:1255px;top:74px;width:23px;height:20px;background:#3D6FD8;"></div>
<div class="t" style="left:1207.3px;top:74.00px;font-size:13px;line-height:13px;font-weight:bold;color:#FFFFFF;letter-spacing:-0.6px;">Quick</div>
<svg class="r" style="left:1259.5px;top:78.5px" width="12" height="11" viewBox="0 0 12 11"><path d="M1,0.5 L11,10.5 M11,0.5 L1,10.5" stroke="#fff" stroke-width="1.9"/></svg>
<svg class="r" style="left:1209px;top:96px" width="62" height="56" viewBox="0 0 62 56">
<defs><linearGradient id="shirt" x1="0" x2="0" y1="0" y2="1"><stop offset="0" stop-color="#D8D8E0"/><stop offset="1" stop-color="#8A8A96"/></linearGradient>
<radialGradient id="skin" cx="0.5" cy="0.4" r="0.6"><stop offset="0" stop-color="#FFE8C8"/><stop offset="1" stop-color="#F0B070"/></radialGradient></defs>
<path d="M2,42 Q2,30 14,28 L32,28 Q42,30 42,42 L42,45 Q42,47 40,47 L4,47 Q2,47 2,45 Z" fill="url(#shirt)"/><path d="M17,28 L22,32 L27,28 Z" fill="#F4F4F4"/>
<rect x="17.5" y="23" width="9" height="6" fill="#F2C08A"/>
<ellipse cx="22" cy="17" rx="9" ry="11" fill="url(#skin)"/>
<path d="M11,18 Q10,3 22,3 Q34,3 34,16 Q30,9 20,10 Q14,12 12,22 Z" fill="#9A6414"/>
<path d="M22,28 Q36,29 38,40 L40,47 Q40,54 38,54 L24,54 Z" fill="#8A5A10" opacity="0"/>
<path d="M24,55 Q24,45 33,44 L50,44 Q60,46 60,53 L60,54 Q60,55 58,55 Z" fill="#151515"/>
<path d="M36,44 L41,53 L46,44 Z" fill="#F2C08A"/>
<path d="M29,46 Q27,34 30,26 Q33,17 41,17 Q50,17 52,26 Q54,36 52,46 Q49,43 47,40 L36,40 Q33,43 29,46 Z" fill="#A06418"/>
<ellipse cx="41.5" cy="31" rx="7" ry="9.5" fill="url(#skin)"/>
<path d="M33,30 Q34,19 42,19 Q50,20 50,28 Q45,23 37,26 Z" fill="#A06418"/>
</svg>
<svg class="r" style="left:1208px;top:162px" width="63" height="63" viewBox="0 0 63 63">
<defs><radialGradient id="cring" cx="0.5" cy="0.5" r="0.5"><stop offset="0.86" stop-color="#C8E0FF"/><stop offset="0.93" stop-color="#5A9AE8"/><stop offset="1" stop-color="#1E4EA8"/></radialGradient>
<radialGradient id="cface" cx="0.5" cy="0.35" r="0.7"><stop offset="0" stop-color="#FFFFFF"/><stop offset="1" stop-color="#DDE8F8"/></radialGradient></defs>
<circle cx="31.5" cy="31.5" r="30.5" fill="url(#cring)" stroke="#1E4AA0" stroke-width="1"/>
<circle cx="31.5" cy="31.5" r="27" fill="url(#cface)" stroke="#8AB8F0" stroke-width="1"/>
<circle cx="31.5" cy="31.5" r="24.5" fill="none" stroke="#A8BCD8" stroke-width="1.6" stroke-dasharray="0.7 1.9"/><g stroke="#8EA8CC" stroke-width="1.2">
<path d="M31.5,8 V11 M31.5,52 V55 M8,31.5 H11 M52,31.5 H55 M43.2,11.2 L41.8,13.8 M19.8,11.2 L21.2,13.8 M51.8,19.8 L49.2,21.2 M11.2,19.8 L13.8,21.2 M51.8,43.2 L49.2,41.8 M11.2,43.2 L13.8,41.8 M43.2,51.8 L41.8,49.2 M19.8,51.8 L21.2,49.2"/>
</g>
<path d="M31.5,31.5 L45,13" stroke="#2A3A9A" stroke-width="1.8"/>
<path d="M31.5,31.5 L18,34" stroke="#2A3A9A" stroke-width="2.4"/>
<path d="M31.5,31.5 L42,49" stroke="#F06A40" stroke-width="1.4"/><path d="M27,22 L31.5,31.5" stroke="#F07A50" stroke-width="2.8" stroke-linecap="round"/>
<circle cx="31.5" cy="31.5" r="2.2" fill="#3A78D8"/>
</svg>
<svg class="r" style="left:1208px;top:233px" width="64" height="64" viewBox="0 0 64 64">
<defs><radialGradient id="bub" cx="0.42" cy="0.42" r="0.62"><stop offset="0" stop-color="#FFFFFF"/><stop offset="0.7" stop-color="#EEF6FA"/><stop offset="0.9" stop-color="#C4E6F4"/><stop offset="1" stop-color="#8ACCEC"/></radialGradient></defs>
<circle cx="32" cy="32" r="31" fill="url(#bub)" stroke="#6CC0EA" stroke-width="1.2"/>
<path d="M10,40 Q14,54 28,58" stroke="#C8CCD4" stroke-width="2.5" fill="none" opacity="0.6"/>
<g fill="none" stroke-linecap="round">
<path d="M32.5,8 V56" stroke="#2A6A22" stroke-width="6.5"/>
<path d="M44,21 C42,15 37,13 32,13 C25.5,13 21,17 21,23 C21,29.5 27,31.5 33,33 C39,34.5 44.5,36.5 44.5,42.5 C44.5,48.5 39,51.5 32.5,51.5 C26,51.5 22,49 20.5,44" stroke="#2A6A22" stroke-width="8.8"/>
<path d="M44,21 C42,15 37,13 32,13 C25.5,13 21,17 21,23 C21,29.5 27,31.5 33,33 C39,34.5 44.5,36.5 44.5,42.5 C44.5,48.5 39,51.5 32.5,51.5 C26,51.5 22,49 20.5,44" stroke="#5EB040" stroke-width="6"/>
<path d="M32.5,8.5 V55.5" stroke="#5AAE40" stroke-width="3.8"/>
<path d="M32.5,8 V55" stroke="#9AD880" stroke-width="1.2"/>
</g>
</svg>
<svg class="r" style="left:1221px;top:313px" width="38" height="46" viewBox="0 0 38 46">
<rect x="7" y="1.5" width="29" height="29" rx="2" fill="#D8D8E4" stroke="#9A9AA8" stroke-width="1"/>
<rect x="10" y="4.5" width="23" height="23" fill="#BFC0D8"/>
<circle cx="21.5" cy="17" r="7" fill="#E8E8F0" stroke="#6A6A7A" stroke-width="1.2"/>
<circle cx="21.5" cy="17" r="3.5" fill="none" stroke="#5A5A6A" stroke-width="1"/>
<path d="M1,28 L17,21 L30,31 L14,38 Z" fill="#C8E8B8"/>
<path d="M1,28 L14,38 L14,45 L1,35 Z" fill="#5EA84A"/>
<path d="M14,38 L30,31 L30,38 L14,45 Z" fill="#3E8E2E"/>
<path d="M7,25.5 L12,23.3 L25,33.2 L20,35.5 Z" fill="#F2E080"/>
<path d="M5,32 L9,35 L9,42 L5,39 Z" fill="#E8D070"/>
</svg>
<svg class="r" style="left:1213px;top:368px" width="59" height="66" viewBox="0 0 59 66">
<defs><linearGradient id="box" x1="0" x2="1"><stop offset="0" stop-color="#C89A68"/><stop offset="1" stop-color="#A87848"/></linearGradient></defs>
<path d="M30,10 L44,2 L58,8 L58,22 L44,30 L30,22 Z" fill="url(#box)" stroke="#8A6038" stroke-width="0.8"/>
<path d="M30,10 L44,16 L58,8 M44,16 V30" stroke="#8A6038" stroke-width="0.8" fill="none"/>
<path d="M1,26 L15,18 L30,24 L30,40 L15,48 L1,41 Z" fill="url(#box)" stroke="#8A6038" stroke-width="0.8"/>
<path d="M1,26 L15,32 L30,24 M15,32 V48" stroke="#8A6038" stroke-width="0.8" fill="none"/>
<path d="M24,28 L38,20 L52,26 L52,40 L38,48 L24,40 Z" fill="url(#box)" stroke="#8A6038" stroke-width="0.8"/>
<path d="M24,28 L38,34 L52,26 M38,34 V48" stroke="#8A6038" stroke-width="0.8" fill="none"/>
<rect x="15" y="36" width="24" height="29" rx="1.5" fill="#E8A040" stroke="#9A6010" stroke-width="0.8"/>
<rect x="18" y="40" width="18" height="22" fill="#F4F8FF"/>
<rect x="22" y="34" width="10" height="5" rx="1" fill="#B0B0B8"/>
<path d="M20,45 L22,47 L25,43 M20,51 L22,53 L25,49" stroke="#20A020" stroke-width="1.5" fill="none"/>
<path d="M20,56 L24,60 M24,56 L20,60" stroke="#D02020" stroke-width="1.4"/>
<path d="M29,56 L47,40 L51,44 L33,60 L28,61 Z" fill="#4A8AE0" stroke="#2A5AA0" stroke-width="0.8"/>
<path d="M47,40 L50,37 L54,41 L51,44 Z" fill="#E84040"/>
</svg>
<svg class="r" style="left:1215px;top:450px" width="47" height="44" viewBox="0 0 47 44">
<rect x="36" y="9" width="9" height="29" fill="#5ACA5A"/>
<rect x="27" y="17" width="9" height="21" fill="#E86A6A"/>
<path d="M14,16 L28,8 L36,9 L45,5" stroke="#E83A3A" stroke-width="2" fill="none"/>
<path d="M1,28 L15,21 L34,31 L20,38 Z" fill="#C8E8A8"/>
<path d="M1,28 L20,38 L20,43 L1,33 Z" fill="#4E9A3A"/>
<path d="M20,38 L34,31 L34,36 L20,43 Z" fill="#3A8A2A"/>
<path d="M6,25.5 L10,23.5 L29,33.5 L25,35.5 Z" fill="#F0E070"/>
<path d="M24,25 L33,35" stroke="#D88820" stroke-width="4" stroke-linecap="round"/>
<circle cx="17" cy="17" r="10.5" fill="#EAF2FA" fill-opacity="0.75" stroke="#A8B0C0" stroke-width="2.4"/>
<path d="M10,22 L14,15 L18,18 L24,12" stroke="#E86A6A" stroke-width="1.2" fill="none"/>
</svg>
<svg class="r" style="left:1218px;top:504px" width="45" height="64" viewBox="0 0 45 64">
<defs><linearGradient id="bel" x1="0" x2="1"><stop offset="0" stop-color="#F0B000"/><stop offset="0.22" stop-color="#FFF4B0"/><stop offset="0.45" stop-color="#FFD000"/><stop offset="1" stop-color="#F09800"/></linearGradient>
<linearGradient id="rim" x1="0" x2="1"><stop offset="0" stop-color="#F8C000"/><stop offset="0.5" stop-color="#FFA800"/><stop offset="1" stop-color="#F08A00"/></linearGradient>
<linearGradient id="han" x1="0" x2="1"><stop offset="0" stop-color="#B87808"/><stop offset="0.35" stop-color="#F0C060"/><stop offset="1" stop-color="#A86A08"/></linearGradient></defs>
<ellipse cx="23" cy="13.5" rx="5.8" ry="12.5" fill="url(#han)" stroke="#7A4000" stroke-width="1"/>
<rect x="20" y="24" width="6" height="6" fill="#C08010"/>
<path d="M3,57.5 Q3,52 8.5,50 L8.5,41 Q8.5,29 23,29 Q37.5,29 37.5,41 L37.5,50 Q43,52 43,57.5 Q43,62.5 23,62.5 Q3,62.5 3,57.5 Z" fill="url(#bel)" stroke="#8A4A00" stroke-width="1.1"/>
<path d="M5,57 Q8,53 23,53 Q38,53 41,57 Q38,61 23,61 Q8,61 5,57 Z" fill="url(#rim)"/>
<ellipse cx="23" cy="30.5" rx="8" ry="3.3" fill="#D09020" stroke="#7A4000" stroke-width="1"/>
</svg>
<div class="r" style="left:2px;top:736px;width:1276px;height:22px;background:linear-gradient(#FAFAFA,#F4F4F4);"></div>
<div class="r" style="left:2px;top:733px;width:1202px;height:1px;background:#FFFFFF;"></div>
<div class="r" style="left:2px;top:735px;width:1203px;height:1px;background:#FCFCFC;"></div>
<div class="t" style="left:5.4px;top:742.44px;font-size:12px;line-height:12px;font-weight:normal;color:#1C1C8A;">Login Name:Michael Kent (Admin)</div>
<div class="t" style="left:217.4px;top:742.44px;font-size:12px;line-height:12px;font-weight:normal;color:#1C1C8A;letter-spacing:-0.3px;">Date:December 16-2013&nbsp; 02:29&nbsp; PM</div>
<div class="t" style="left:429.6px;top:742.44px;font-size:12px;line-height:12px;font-weight:normal;color:#1C1C8A;letter-spacing:-0.2px;">DataBase Location:Local</div>
<div class="r" style="left:5px;top:53px;width:2px;height:2px;background:#A8A8A8;"></div>
<div class="r" style="left:5px;top:57px;width:2px;height:2px;background:#A8A8A8;"></div>
<div class="r" style="left:5px;top:61px;width:2px;height:2px;background:#A8A8A8;"></div>
<div class="r" style="left:5px;top:65px;width:2px;height:2px;background:#A8A8A8;"></div>
<div class="r" style="left:60.5px;top:54px;width:1.0px;height:15px;background:#C8C8C8;"></div>
<div class="r" style="left:135.5px;top:54px;width:1.0px;height:15px;background:#C8C8C8;"></div>
<div class="r" style="left:164.5px;top:54px;width:1.0px;height:15px;background:#C8C8C8;"></div>
<div class="r" style="left:193.5px;top:54px;width:1.0px;height:15px;background:#C8C8C8;"></div>
<div class="r" style="left:245.5px;top:54px;width:1.0px;height:15px;background:#C8C8C8;"></div>
<div class="r" style="left:274.5px;top:54px;width:1.0px;height:15px;background:#C8C8C8;"></div>
<div class="r" style="left:303.5px;top:54px;width:1.0px;height:15px;background:#C8C8C8;"></div>
<svg class="r" style="left:14px;top:53px" width="16" height="16" viewBox="0 0 16 16"><path d="M1,13 Q1,8 4.5,7.5 L7.5,7.5 Q9.5,8 9.5,13 Z" fill="#9A9AAA"/><ellipse cx="6.2" cy="4.2" rx="2.3" ry="2.9" fill="#F6C890"/><path d="M3.8,3.8 Q3.8,0.8 6.4,0.8 Q8.8,1 8.6,3.8 Q7,2.6 4.8,3.2 Z" fill="#8A5A18"/><path d="M7,15.3 Q7,11.2 10,11 L13,11 Q15.6,11.2 15.6,15.3 Z" fill="#151515"/><path d="M8,12 Q7.6,5.2 11.2,5.2 Q14.4,5.4 14.2,12 Z" fill="#9A6418"/><ellipse cx="11.4" cy="8.6" rx="2" ry="2.5" fill="#F6C890"/><path d="M10.6,11 L11.4,13.5 L12.2,11 Z" fill="#F6C890"/></svg>
<svg class="r" style="left:38px;top:53px" width="16" height="16" viewBox="0 0 16 16"><ellipse cx="7" cy="9" rx="6.5" ry="5" fill="#FFF6A0" opacity="0.7"/><path d="M2,11 L8,7 L13,10 L8,14 Z" fill="#2E8AE0"/><path d="M3,8 Q7,5 11,8" stroke="#7ACCF0" stroke-width="2" fill="none"/><path d="M5,12 L14,3" stroke="#30A030" stroke-width="2"/><path d="M13,2 L15,1" stroke="#E0C020" stroke-width="2"/><path d="M3,13 L6,14" stroke="#204080" stroke-width="1.5"/></svg>
<svg class="r" style="left:66px;top:53px" width="17" height="17" viewBox="0 0 17 17"><circle cx="8.5" cy="8.5" r="7.5" fill="#F8FBFF" stroke="#2A6AD0" stroke-width="1.3" stroke-dasharray="2 1"/><path d="M8.5,8.5 L12,5 M8.5,8.5 L5,9" stroke="#2A3A9A" stroke-width="1"/><path d="M7,5 L10,12" stroke="#E06040" stroke-width="0.8"/></svg>
<svg class="r" style="left:90px;top:54px" width="16" height="15" viewBox="0 0 16 15"><path d="M2.5,1.5 Q0.3,3 0.5,8 Q0.8,12.5 3,13.5" fill="none" stroke="#3A3A48" stroke-width="1.2"/><rect x="2" y="0.5" width="13" height="13" rx="1.5" fill="#2A8CF4"/><rect x="2" y="0.5" width="13" height="4" fill="#5AAAF8"/><rect x="8" y="1.5" width="5.5" height="2" fill="#C8D870"/><path d="M7.5,6 H8.5 M10,6 H11 M12.5,6 H13.5 M7.5,8.5 H8.5 M10,8.5 H11 M12.5,8.5 H13.5 M7.5,11 H8.5 M10,11 H11 M12.5,11 H13.5" stroke="#E8F4FF" stroke-width="1.4"/></svg>
<svg class="r" style="left:113px;top:53px" width="16" height="16" viewBox="0 0 16 16"><path d="M2,12 L9,4 L15,10 L8,15 Z" fill="#E8F4FF" stroke="#30A040" stroke-width="1.2"/><path d="M4,12 L8,9 L10,11 L13,7" stroke="#3A6AD0" stroke-width="1" fill="none"/><path d="M5,11 L10,1" stroke="#F0A020" stroke-width="2"/><path d="M9,2 L10.5,0.5" stroke="#E04040" stroke-width="2"/></svg>
<svg class="r" style="left:141px;top:53px" width="16" height="16" viewBox="0 0 16 16"><circle cx="8" cy="8" r="7.5" fill="#E4F2FA" stroke="#A8D8F0" stroke-width="1"/><text x="8" y="13.6" text-anchor="middle" font-family="Liberation Sans" font-weight="bold" font-size="14.5" fill="#3A8A2A">$</text></svg>
<svg class="r" style="left:173px;top:56px" width="11" height="13" viewBox="0 0 11 13"><rect x="2" y="0.5" width="8.5" height="7" fill="#A8A8D0" stroke="#8888B0" stroke-width="0.6"/><circle cx="6" cy="4" r="1.8" fill="none" stroke="#5A5A8A" stroke-width="0.8"/><path d="M0.5,6 L4,6 L4,5 L7.5,5 L7.5,8 L9.5,8 L5,12 L0.5,8 Z" fill="#5AB040"/><path d="M1,6.5 L4,6.5 L4,9 Z" fill="#E8D060"/></svg>
<svg class="r" style="left:200px;top:54px" width="15" height="14" viewBox="0 0 15 14"><path d="M1,8 L8,4 L14,8 L7,12 Z" fill="#E8F8E0"/><path d="M1,8 L7,12 L7,14 L1,10 Z" fill="#222"/><path d="M7,12 L14,8 L14,10 L7,14 Z" fill="#333"/><path d="M4,5 L7,3" stroke="#E03030" stroke-width="1.4"/><path d="M10,2 L13,3" stroke="#E03030" stroke-width="1.2"/><rect x="11" y="4" width="2" height="4" fill="#40B040"/></svg>
<svg class="r" style="left:222px;top:54px" width="17" height="15" viewBox="0 0 17 15"><path d="M10,1.5 Q16.5,3 16,8.5 Q15,14 9,14 Q4,14 3,10" fill="none" stroke="#F0A010" stroke-width="4"/><path d="M0.5,9 L7.5,4.5 L8,13 Z" fill="#F8A818"/><path d="M11,2 Q13,2.5 14,4" stroke="#FFD860" stroke-width="1.2" fill="none"/></svg>
<svg class="r" style="left:253px;top:55px" width="12" height="13" viewBox="0 0 12 13"><rect x="8" y="3" width="3" height="8" fill="#40B040"/><rect x="5" y="6" width="3" height="5" fill="#E86060"/><path d="M3,4 L6,2 L9,3 L11,1" stroke="#E03030" stroke-width="1" fill="none"/><path d="M1,9 L5,7 L9,10 L5,12 Z" fill="#70B050"/><circle cx="4" cy="6" r="2.5" fill="none" stroke="#A0A8B8" stroke-width="0.9"/></svg>
<svg class="r" style="left:280px;top:53px" width="17" height="17" viewBox="0 0 17 17"><path d="M9,2 L14,1 L16,4 L12,8 Z" fill="#F0C030"/><path d="M8,4 L10,15" stroke="#5A9AE8" stroke-width="2.5"/><path d="M11,6 L13,15" stroke="#A8C8F0" stroke-width="2"/><circle cx="4" cy="12" r="3" fill="none" stroke="#5A8AE0" stroke-width="1" stroke-dasharray="1.2 1"/></svg>
<svg class="r" style="left:309px;top:53px" width="16" height="16" viewBox="0 0 16 16"><circle cx="8" cy="8" r="7.3" fill="#2A6AE0" stroke="#1A4AA0" stroke-width="0.8"/><circle cx="8" cy="8" r="5.8" fill="none" stroke="#A8C8FF" stroke-width="0.8"/><text x="8" y="12.3" text-anchor="middle" font-family="Liberation Sans" font-weight="bold" font-size="11" fill="#fff">?</text></svg>
<svg class="r" style="left:334px;top:53px" width="13" height="16" viewBox="0 0 13 16"><rect x="5.5" y="0.5" width="2" height="6" rx="1" fill="#B07010"/><path d="M3.5,7 Q3,12 1,14 L12,14 Q10,12 9.5,7 Z" fill="#F8C820" stroke="#C08000" stroke-width="0.6"/><rect x="1" y="13.5" width="11" height="2" rx="1" fill="#E8A010"/></svg>
<svg class="r" style="left:920px;top:676px" width="47" height="48" viewBox="0 0 47 48"><g fill="#C6C6C6"><path d="M12,0 Q24,0 24,11 Q24,19 17,22 L17,38 L14,44 L9,40 L9,22 Q1,19 1,11 Q1,0 12,0 Z M12,4 Q5,4 5,11 L19,11 Q19,4 12,4 Z"/><path d="M26,12 Q34,14 32,24 L45,40 L43,45 L39,44 L26,30 Q20,30 17,24 L21,20 Q27,21 26,12 Z"/></g></svg>
<div class="t" style="left:973.2px;top:682.56px;font-size:19.3px;line-height:19.3px;font-weight:normal;color:#C6C6C6;letter-spacing:0.1px;">Activate Windows</div>
<div class="t" style="left:973.2px;top:707.31px;font-size:14.4px;line-height:14.4px;font-weight:normal;color:#C8C8C8;letter-spacing:0.15px;">Go to PC settings to activate Windows.</div>
</body></html>
